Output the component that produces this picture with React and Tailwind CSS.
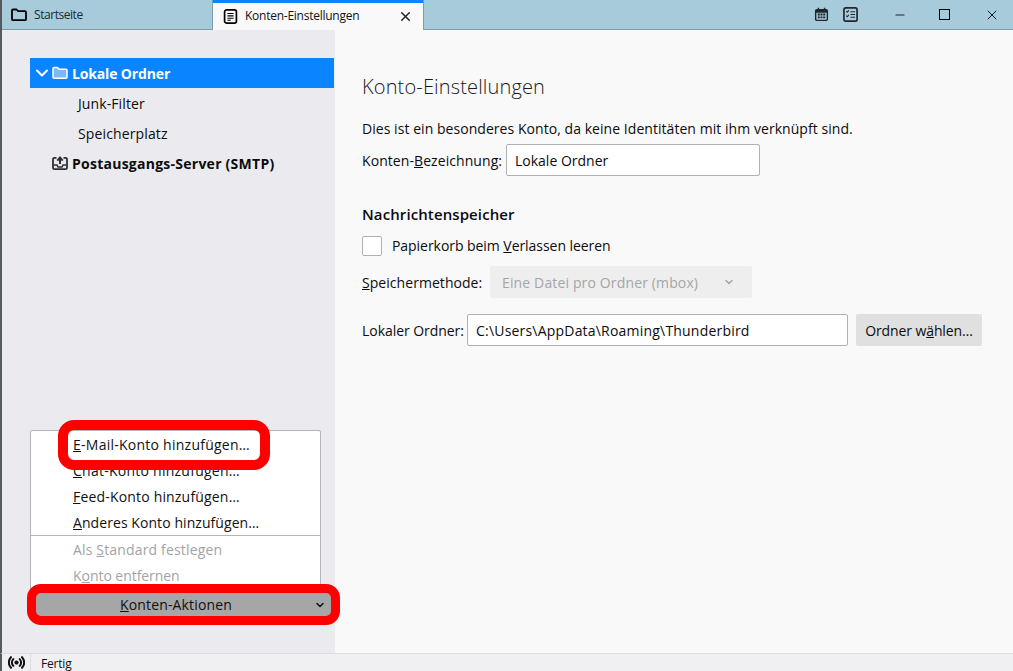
import React from 'react';
import { ChevronDown, X, Minus } from 'lucide-react';

const FONT = "font-['Open_Sans',sans-serif]";

const FolderIcon = ({ className, fill = 'none', strokeWidth = 1.500 }) => (
  <svg viewBox="0 0 16 16" className={className} fill={fill} stroke="currentColor" strokeWidth={strokeWidth} strokeLinejoin="round">
    <path d="M1 3.500c0-.6.5-1 1-1h3.500l1.600 1.700H14c.6 0 1 .4 1 1v7c0 .6-.4 1-1 1H2c-.5 0-1-.4-1-1z" />
  </svg>
);

const TabDocIcon = () => (
  <svg viewBox="0 0 16 16" className="w-[15px] h-[15px] text-black" fill="none" stroke="currentColor">
    <rect x="1.700" y="1" width="12.600" height="14" rx="2" strokeWidth="1.800" />
    <path d="M4.700 4.800h6.600M4.700 7.300h6.600M4.700 9.800h6.600M4.700 12h3.600" strokeWidth="1.200" />
  </svg>
);

const CalendarIcon = () => (
  <svg viewBox="0 0 16 16" className="w-[15px] h-[15px] text-[#20272b]" fill="currentColor">
    <path d="M3 2h1V.8h1.500V2h5V.8H12V2h1c1.100 0 2 .9 2 2v9c0 1.100-.9 2-2 2H3c-1.100 0-2-.9-2-2V4c0-1.100.9-2 2-2zm-.5 4v7c0 .3.2.5.5.5h10c.3 0 .5-.2.5-.5V6z" />
    <path d="M4 7h2.200v2H4zM6.900 7h2.200v2H6.900zM9.800 7H12v2H9.800zM4 10h2.200v2H4zM6.900 10h2.200v2H6.900zM9.800 10H12v2H9.800z" />
  </svg>
);

const TasksIcon = () => (
  <svg viewBox="0 0 16 16" className="w-[15px] h-[15px] text-[#20272b]" fill="none" stroke="currentColor">
    <rect x="1" y="1" width="14" height="14" rx="1.800" strokeWidth="1.800" />
    <path d="M3.500 4.500l1 1 1.800-1.800M3.500 9.300l1 1 1.800-1.800" strokeWidth="1.100" />
    <path d="M8 5h4.800M8 8h4.800M8 11h4.800" strokeWidth="1.100" />
  </svg>
);

const OutboxIcon = () => (
  <svg viewBox="0 0 16 16" className="w-[16px] h-[16px] text-[#2f2f33]" fill="none" stroke="currentColor">
    <path d="M4.500 2.800H2.500C1.700 2.800 1 3.500 1 4.300v8.400c0 .8.700 1.500 1.500 1.500h11c.8 0 1.500-.7 1.500-1.500V4.300c0-.8-.7-1.500-1.500-1.500h-2" strokeWidth="1.800" />
    <path d="M1.500 10H5l1 2h4l1-2h3.500" strokeWidth="1.500" />
    <path d="M8 9V3M5.300 5.600L8 2.600l2.700 3" strokeWidth="2" />
  </svg>
);

const RadioIcon = () => (
  <svg viewBox="0 0 16 16" className="w-[17px] h-[17px] text-[#111]" fill="none" stroke="currentColor" strokeWidth="1.900" strokeLinecap="round">
    <circle cx="8" cy="8" r="2" fill="currentColor" stroke="none" />
    <path d="M5 4.800a4.500 4.500 0 000 6.400M11 4.800a4.500 4.500 0 010 6.400M2.800 3a7.200 7.200 0 000 10M13.200 3a7.200 7.200 0 010 10" />
  </svg>
);

const TreeRow = ({ children, className = '' }) => (
  <div className={`h-[30px] flex items-center ${className}`}>{children}</div>
);

const MenuItem = ({ children, disabled, className = '' }) => (
  <div className={`h-[26px] flex items-center pl-[42px] text-[14px] ${disabled ? 'text-[#a3a3a5]' : 'text-[#111]'} ${className}`}>
    {children}
  </div>
);

export default function App() {
  return (
    <div className={`relative w-[1013px] h-[671px] overflow-hidden flex flex-col bg-[#f9f9fa] text-[#0c0c0d] ${FONT}`}>
      {/* title bar */}
      <div className="h-[30px] flex bg-[#a8cbdc] border-l-2 border-[#555a5e] shrink-0">
        <div className="w-[211px] h-[30px] flex items-center pl-[9px] border-r border-b border-[#7f9aa8]">
          <FolderIcon className="w-[16px] h-[16px] text-black" strokeWidth={1.800} />
          <span className="ml-[7px] text-[12px] text-[#1a2a30] tracking-[-0.45px]">Startseite</span>
        </div>
        <div className="w-[210px] h-[30px] flex items-center pl-[10px] bg-[#f9f9fa] border-t-[3px] border-[#0a84ff] pb-[1px]">
          <TabDocIcon />
          <span className="ml-[7px] text-[12px] text-[#111] tracking-[-0.25px]">Konten-Einstellungen</span>
          <X className="w-[15px] h-[15px] ml-[39px] text-[#222]" strokeWidth={2.400} />
        </div>
        <div className="flex-1 flex items-center border-l border-b border-[#7f9aa8] h-[30px]">
          <div className="ml-[390px] flex items-center gap-[14px]">
            <CalendarIcon />
            <TasksIcon />
          </div>
          <Minus className="w-[14px] h-[14px] ml-[35px] text-black" strokeWidth={1.400} />
          <div className="w-[11px] h-[11px] ml-[32px] border-[1.5px] border-black" />
          <X className="w-[16px] h-[16px] ml-[34px] text-black" strokeWidth={1.300} />
        </div>
      </div>

      {/* main */}
      <div className="flex-1 flex min-h-0 border-l-2 border-[#555a5e]">
        <aside className="w-[333px] bg-[#ebebef] flex flex-col justify-between pt-[28px] pb-[37px] shrink-0">
          <div className="ml-[28px] w-[304px] text-[14px]">
            <TreeRow className="bg-[#0a84ff] text-white font-bold pl-[2px] tracking-[-0.15px]">
              <ChevronDown className="w-[20px] h-[20px]" strokeWidth={2.500} />
              <FolderIcon className="w-[16px] h-[16px]" fill="#7cb8fb" />
              <span className="ml-[4px]">Lokale Ordner</span>
            </TreeRow>
            <TreeRow className="pl-[48px] tracking-[0.1px]">Junk-Filter</TreeRow>
            <TreeRow className="pl-[48px] tracking-[0.13px]">Speicherplatz</TreeRow>
            <TreeRow className="font-bold pl-[22px] tracking-[0.25px]">
              <OutboxIcon />
              <span className="ml-[4px]">Postausgangs-Server (SMTP)</span>
            </TreeRow>
          </div>

          <div>
            <div className="ml-[28px] w-[291px] h-[163px] bg-white border border-[#b5b5b5] rounded-[2px]">
              <MenuItem className="tracking-[0.25px]"><span><u>E</u>-Mail-Konto hinzufügen…</span></MenuItem>
              <MenuItem className="tracking-[0.25px]"><span><u>C</u>hat-Konto hinzufügen…</span></MenuItem>
              <MenuItem className="tracking-[0.18px]"><span><u>F</u>eed-Konto hinzufügen…</span></MenuItem>
              <MenuItem className="tracking-[0.07px]"><span><u>A</u>nderes Konto hinzufügen…</span></MenuItem>
              <div className="h-px bg-[#b5b5b5]" />
              <MenuItem disabled className="tracking-[0.16px]"><span>Als <u>S</u>tandard festlegen</span></MenuItem>
              <MenuItem disabled className="tracking-[-0.05px]"><span>K<u>o</u>nto entfernen</span></MenuItem>
            </div>
            <button className="ml-[34px] w-[295px] h-[23px] pl-[2px] bg-[#a6a6a6] flex items-center text-[14px] tracking-[0.15px] text-[#111]">
              <span className="flex-1 text-center"><u>K</u>onten-Aktionen</span>
              <ChevronDown className="w-[12px] h-[12px] mr-[5px]" strokeWidth={3} />
            </button>
          </div>
        </aside>

        <main className="flex-1 pl-[27px] pt-[42px] text-[14px]">
          <h1 className="text-[20px] leading-[30px] font-light tracking-[0.15px] text-[#1a1a1e]">Konto-Einstellungen</h1>
          <p className="mt-[17px] h-[20px] leading-[20px] tracking-[0.05px]">Dies ist ein besonderes Konto, da keine Identitäten mit ihm verknüpft sind.</p>
          <div className="flex items-center mt-[5px]">
            <label className="w-[144px] tracking-[0.07px]">Konten-<u>B</u>ezeichnung:</label>
            <div className="w-[254px] h-[32px] flex items-center px-[8px] bg-white border border-[#b1b1b3] rounded-[2px]">Lokale Ordner</div>
          </div>
          <h2 className="mt-[26px] h-[24px] leading-[24px] text-[15px] font-semibold tracking-[0.1px]">Nachrichtenspeicher</h2>
          <label className="mt-[9px] flex items-center">
            <span className="w-[20px] h-[20px] bg-white border border-[#b1b1b3] rounded-[2px]" />
            <span className="ml-[10px] tracking-[-0.05px]">Papierkorb beim <u>V</u>erlassen leeren</span>
          </label>
          <div className="flex items-center mt-[10px]">
            <label className="w-[128px] tracking-[0.05px]"><u>S</u>peichermethode:</label>
            <div className="w-[262px] h-[32px] flex items-center pl-[12px] bg-[#eeeeee] rounded-[2px] text-[#a5a5a7]">
              <span className="w-[221px] tracking-[0.14px]">Eine Datei pro Ordner (mbox)</span>
              <ChevronDown className="w-[12px] h-[12px]" strokeWidth={3} />
            </div>
          </div>
          <div className="flex items-center mt-[16px]">
            <label className="w-[105px] tracking-[-0.05px]">Lokaler Ordner:</label>
            <div className="w-[381px] h-[32px] flex items-center px-[8px] bg-white border border-[#b1b1b3] rounded-[2px] tracking-[0.2px]">C:\Users\AppData\Roaming\Thunderbird</div>
            <button className="ml-[8px] w-[126px] h-[32px] bg-[#e0e0e1] rounded-[2px] text-center tracking-[-0.1px]">Ordner w<u>ä</u>hlen…</button>
          </div>
        </main>
      </div>

      {/* status bar */}
      <div className="h-[18px] shrink-0 flex items-start bg-[#f0f0f2] border-t border-[#dcdcde] border-l-2 border-l-[#555a5e]">
        <div className="w-[29px] h-[17px] flex items-center justify-center border-r border-[#dcdcde]">
          <RadioIcon />
        </div>
        <span className="ml-[10px] text-[12px] leading-[20px] tracking-[-0.2px] text-[#111]">Fertig</span>
      </div>

      {/* red annotation frames */}
      <div className="absolute left-[58px] top-[420px] w-[212px] h-[50px] border-[10px] border-[#fe0000] rounded-[16px]" />
      <div className="absolute left-[27px] top-[584px] w-[313px] h-[41px] border-[9px] border-[#fe0000] rounded-[14px]" />
    </div>
  );
}
